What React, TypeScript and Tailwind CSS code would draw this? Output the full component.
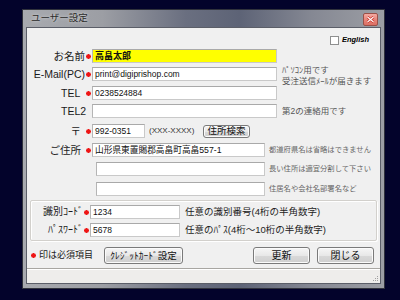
import React from "react";

// small red "required" mark
const Req = () => (
    <svg width="5" height="5" viewBox="0 0 5 5" className="block">
        <path d="M2.5 0V5M0 2.5H5M0.7 0.7L4.3 4.3M4.3 0.7L0.7 4.3" stroke="#ee1515" strokeWidth="1.3" />
    </svg>
);

const Field = ({ value, className }: { value?: string; className: string }) => (
    <div
        className={
            "h-[14px] flex items-center pl-[2px] border border-[#c9c9c9] border-t-[#a9a9a9] border-l-[#b5b5b5] leading-none whitespace-nowrap overflow-hidden " +
            className
        }
    >
        {value}
    </div>
);

const Button = ({ label, className }: { label: string; className: string }) => (
    <div
        className={
            "flex items-center justify-center rounded-[3px] border border-[#7a7a7a] bg-[linear-gradient(180deg,#f6f6f6,#e8e8e8_50%,#d9d9d9_51%,#cfcfcf)] shadow-[inset_0_0_0_1px_#fbfbfb] text-[#111] leading-none " +
            className
        }
    >
        {label}
    </div>
);

const Row = ({
    label,
    req,
    labelClass,
    children,
    className,
}: {
    label?: string;
    req?: boolean;
    labelClass?: string;
    children: React.ReactNode;
    className?: string;
}) => (
    <div className={"flex items-center h-[14px] " + (className ?? "")}>
        <div className={"w-[58px] text-[10.5px] text-[#1a1a1a] leading-none whitespace-nowrap " + (labelClass ?? "text-right")}>
            {label}
        </div>
        <div className="w-[7px] flex justify-center">{req && <Req />}</div>
        {children}
    </div>
);

export default function App() {
    return (
        <div className="w-[400px] h-[300px] overflow-hidden bg-[#03032b] pt-[9px] pl-[22px] font-['Liberation_Sans','Noto_Sans_CJK_JP',sans-serif]">
            {/* window frame */}
            <div className="w-[363px] h-[280px] flex flex-col border border-[#30323c] bg-[linear-gradient(90deg,#a8aaaf,#9c9ea4_22%,#6a6f80_45%,#5d6376_60%,#858893_80%,#9c9ea4)] px-[3px] pb-[4px]">
                {/* title bar */}
                <div className="h-[17px] flex justify-between pl-[5px] pr-[3px]">
                    <span className="mt-[3px] text-[9.5px] leading-none text-[#2a2a2a] [text-shadow:0_0_3px_#e4e4e4]">
                        ユーザー設定
                    </span>
                    <div className="mt-[3px] w-[15px] h-[13px] rounded-[2px] border border-[#9a5048] bg-[linear-gradient(180deg,#f4aaa2,#e8857a_50%,#dc6f63)] flex items-center justify-center">
                        <svg width="9" height="7" viewBox="0 0 9 7">
                            <path d="M1.5 1L7.5 6M7.5 1L1.5 6" stroke="#c42a20" strokeWidth="2.4" />
                            <path d="M1.5 1L7.5 6M7.5 1L1.5 6" stroke="#fff" strokeWidth="1.1" />
                        </svg>
                    </div>
                </div>

                {/* client area */}
                <div className="flex-1 flex flex-col border border-[#5b5e68] bg-[#f0f0f0]">
                    {/* English */}
                    <div className="mt-[7px] h-[10px] flex items-center justify-end pr-[11px] gap-[3px]">
                        <div className="w-[9px] h-[9px] border border-[#8e8f8f] bg-white" />
                        <span className="text-[7.5px] font-bold italic leading-none text-black">English</span>
                    </div>

                    <Row label="お名前" req className="mt-[4px]">
                        <Field value="高畠太郎" className="w-[185px] bg-[#ffff00] text-[9px] font-bold text-[#111]" />
                    </Row>

                    <Row label="E-Mail(PC)" req className="mt-[4px]">
                        <Field value="print@digiprishop.com" className="w-[185px] bg-white text-[8.5px] text-[#111]" />
                        <div className="ml-[5px] -mt-[2px] self-start text-[8.5px] leading-[11px] text-[#555] whitespace-nowrap">
                            <div>ﾊﾟｿｺﾝ用です</div>
                            <div>受注送信ﾒｰﾙが届きます</div>
                        </div>
                    </Row>

                    <Row label="TEL" req labelClass="pl-[34px] text-left" className="mt-[5px]">
                        <Field value="0238524884" className="w-[185px] bg-white text-[8.5px] text-[#111]" />
                    </Row>

                    <Row label="TEL2" labelClass="pl-[34px] text-left" className="mt-[4px]">
                        <Field className="w-[185px] bg-white" />
                        <span className="ml-[5px] text-[8.5px] leading-none text-[#555] whitespace-nowrap">第2の連絡用です</span>
                    </Row>

                    <Row label="〒" req className="mt-[6px]" labelClass="text-right pr-[4px]">
                        <Field value="992-0351" className="w-[53px] bg-white text-[8.5px] text-[#111]" />
                        <span className="ml-[4px] w-[54px] text-[8px] leading-none text-[#333]">(XXX-XXXX)</span>
                        <Button label="住所検索" className="w-[47px] h-[13px] text-[9.5px]" />
                    </Row>

                    <Row label="ご住所" req className="mt-[5px]" labelClass="text-right pr-[4px]">
                        <Field value="山形県東置賜郡高畠町高畠557-1" className="w-[173px] bg-white text-[8.7px] text-[#111]" />
                        <span className="ml-[4px] text-[7.3px] leading-none text-[#666] whitespace-nowrap">都道府県名は省略はできません</span>
                    </Row>

                    <Row className="mt-[5px]">
                        <Field className="ml-[4px] w-[169px] bg-white" />
                        <span className="ml-[4px] text-[7.3px] leading-none text-[#666] whitespace-nowrap">長い住所は適宜分割して下さい</span>
                    </Row>

                    <Row className="mt-[6px]">
                        <Field className="ml-[4px] w-[169px] bg-white" />
                        <span className="ml-[4px] text-[7.3px] leading-none text-[#666] whitespace-nowrap">住居名や会社名部署名など</span>
                    </Row>

                    {/* ID / password group */}
                    <div className="mt-[4px] ml-[3px] w-[347px] h-[41px] flex flex-col border border-[#d2d0cc] rounded-[2px] shadow-[inset_1px_1px_0_#fff,1px_1px_0_#fff] pt-[4px]">
                        <div className="flex items-center h-[14px]">
                            <div className="w-[52px] text-right text-[10px] leading-none text-[#1a1a1a] whitespace-nowrap">識別ｺｰﾄﾞ</div>
                            <div className="w-[7px] flex justify-center"><Req /></div>
                            <Field value="1234" className="w-[90px] bg-white text-[8.5px] text-[#111]" />
                            <span className="ml-[5px] text-[9.5px] leading-none text-[#222] whitespace-nowrap">任意の識別番号(4桁の半角数字)</span>
                        </div>
                        <div className="mt-[4px] flex items-center h-[14px]">
                            <div className="w-[52px] text-right text-[10px] leading-none text-[#1a1a1a] whitespace-nowrap">ﾊﾟｽﾜｰﾄﾞ</div>
                            <div className="w-[7px] flex justify-center"><Req /></div>
                            <Field value="5678" className="w-[90px] bg-white text-[8.5px] text-[#111]" />
                            <span className="ml-[5px] text-[9.5px] leading-none text-[#222] whitespace-nowrap">任意のﾊﾟｽ(4桁～10桁の半角数字)</span>
                        </div>
                    </div>

                    {/* bottom buttons */}
                    <div className="mt-[6px] h-[17px] flex items-center pr-[6px]">
                        <div className="w-[77px] flex items-center pl-[4px] gap-[3px]">
                            <Req />
                            <span className="text-[9px] leading-none text-[#1a1a1a] whitespace-nowrap">印は必須項目</span>
                        </div>
                        <Button label="ｸﾚｼﾞｯﾄｶｰﾄﾞ設定" className="w-[79px] h-[17px] text-[9.5px]" />
                        <div className="flex-1" />
                        <Button label="更新" className="w-[57px] h-[17px] text-[10px]" />
                        <Button label="閉じる" className="ml-[7px] w-[57px] h-[17px] text-[10px]" />
                    </div>

                    {/* status bar */}
                    <div className="mt-[4px] flex-1 border-t border-[#a8a6a2] shadow-[inset_0_1px_0_#fff] bg-[#eeedeb] flex items-end justify-end pr-[1px] pb-[1px]">
                        <svg width="7" height="7" viewBox="0 0 7 7">
                            <rect x="5" y="1" width="1" height="1" fill="#a0a0a0" />
                            <rect x="3" y="3" width="1" height="1" fill="#a0a0a0" />
                            <rect x="5" y="3" width="1" height="1" fill="#a0a0a0" />
                            <rect x="1" y="5" width="1" height="1" fill="#a0a0a0" />
                            <rect x="3" y="5" width="1" height="1" fill="#a0a0a0" />
                            <rect x="5" y="5" width="1" height="1" fill="#a0a0a0" />
                        </svg>
                    </div>
                </div>
            </div>
        </div>
    );
}
